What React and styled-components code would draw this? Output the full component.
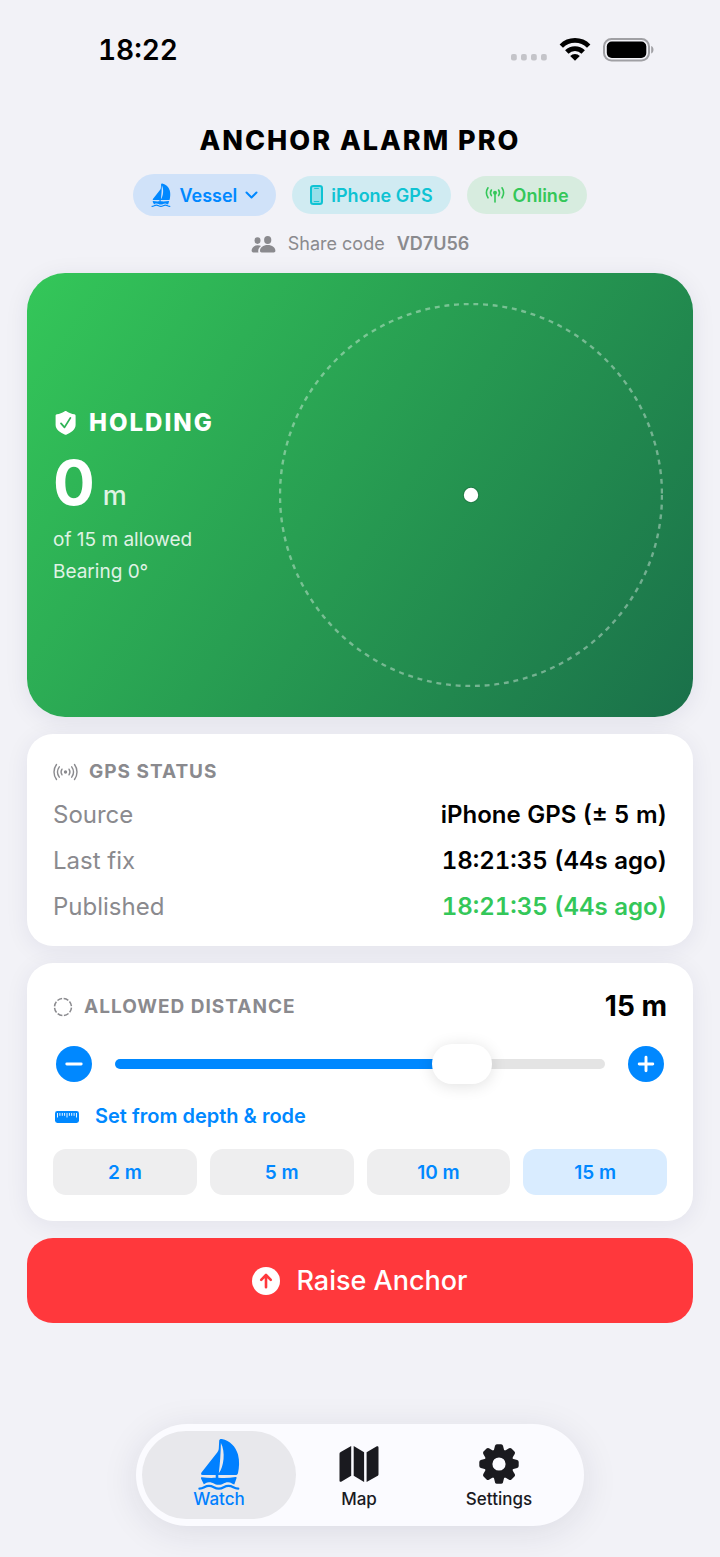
import React, { useState } from "react";
import styled, { createGlobalStyle } from "styled-components";

const GlobalStyle = createGlobalStyle`
  *, *::before, *::after { box-sizing: border-box; }
  body {
    margin: 0;
    background: #f2f2f7;
    color: #000;
    font-family: Inter, "Liberation Sans", sans-serif;
    -webkit-font-smoothing: antialiased;
  }
  button { font: inherit; border: 0; margin: 0; padding: 0; cursor: pointer; }
  h1, h2, p, dl, dd { margin: 0; }
  svg { display: block; flex: none; }
`;

const Page = styled.div`
  display: flex;
  flex-direction: column;
  min-height: 100vh;
  padding-bottom: 31px;
`;

const StatusBar = styled.div`
  display: flex;
  align-items: center;
  justify-content: space-between;
  height: 100px;
  padding: 0 66px 0 98px;
`;

const Clock = styled.time`
  font-size: 28px;
  line-height: 34px;
  font-weight: 600;
  font-variant-numeric: tabular-nums;
`;

const StatusIcons = styled.div`
  display: flex;
  align-items: center;
  gap: 12px;
`;

const Header = styled.header`
  display: flex;
  flex-direction: column;
  align-items: center;
  gap: 15px;
  padding: 23px 26px 16px;
`;

const Title = styled.h1`
  font-size: 27px;
  line-height: 36px;
  font-weight: 800;
  letter-spacing: 2px;
`;

const Chips = styled.div`
  display: flex;
  align-items: center;
  gap: 16px;
`;

const Chip = styled.span`
  display: flex;
  align-items: center;
  gap: 8px;
  height: ${(p) => (p.$tall ? 42 : 38)}px;
  padding: 0 18px;
  border-radius: 21px;
  background: ${(p) => p.$bg};
  color: ${(p) => p.$color};
  font-size: 18px;
  font-weight: 600;
`;

const ShareRow = styled.p`
  display: flex;
  align-items: center;
  gap: 12px;
  color: #8a8a8e;
  font-size: 18px;
  line-height: 26px;
`;

const ShareCode = styled.strong`
  font-weight: 600;
`;

const Main = styled.main`
  display: flex;
  flex-direction: column;
  gap: 17px;
  padding: 0 27px 60px;
`;

const Hero = styled.section`
  display: flex;
  align-items: center;
  justify-content: space-between;
  padding: 30px 30px 30px 26px;
  border-radius: 38px;
  background: linear-gradient(124deg, #34c759, #1a704a);
  box-shadow: 0 4px 24px rgba(30, 30, 80, 0.08);
  color: #fff;
`;

const HeroText = styled.div`
  display: flex;
  flex-direction: column;
  padding-top: 2px;
`;

const HeroState = styled.h2`
  display: flex;
  align-items: center;
  gap: 11px;
  font-size: 24px;
  line-height: 30px;
  font-weight: 800;
  letter-spacing: 2px;
`;

const Reading = styled.p`
  display: flex;
  align-items: baseline;
  gap: 8px;
  margin: 13px 0;
  font-size: 62px;
  line-height: 64px;
  font-weight: 700;
`;

const Unit = styled.span`
  font-size: 27px;
  line-height: 34px;
  font-weight: 500;
  opacity: 0.85;
`;

const HeroNote = styled.p`
  font-size: 19px;
  line-height: 24px;
  opacity: 0.85;
  & + & { margin-top: 8px; }
`;

const RadarSvg = styled.svg`
  flex: 0 1 384px;
  min-width: 0;
  aspect-ratio: 1;
`;

const Card = styled.section`
  display: flex;
  flex-direction: column;
  gap: ${(p) => p.$gap}px;
  padding: 26px 26px ${(p) => p.$bottom}px;
  border-radius: 26px;
  background: #fff;
  box-shadow: 0 4px 24px rgba(30, 30, 80, 0.07);
`;

const CardTitle = styled.h2`
  display: flex;
  align-items: center;
  gap: 11px;
  color: #8a8a8e;
  font-size: 19px;
  line-height: 24px;
  font-weight: 700;
  letter-spacing: 1px;
`;

const Facts = styled.dl`
  display: flex;
  flex-direction: column;
  gap: 16px;
`;

const Fact = styled.div`
  display: flex;
  justify-content: space-between;
  font-size: 24px;
  line-height: 30px;
`;

const FactName = styled.dt`
  color: #8a8a8e;
`;

const FactValue = styled.dd`
  font-weight: 600;
  font-variant-numeric: tabular-nums;
  color: ${(p) => (p.$good ? "#34c759" : "#000")};
`;

const CardHead = styled.div`
  display: flex;
  align-items: center;
  justify-content: space-between;
`;

const Distance = styled.output`
  font-size: 28px;
  line-height: 35px;
  font-weight: 700;
`;

const SliderRow = styled.div`
  display: flex;
  align-items: center;
  gap: 23px;
  padding: 0 3px;
`;

const RoundButton = styled.button`
  flex: none;
  display: grid;
  place-items: center;
  width: 36px;
  height: 36px;
  border-radius: 50%;
  background: #0088ff;
  color: #fff;
`;

const Slider = styled.input`
  flex: 1;
  min-width: 0;
  height: 40px;
  margin: 0;
  background: none;
  appearance: none;

  &::-webkit-slider-runnable-track {
    height: 10px;
    border-radius: 5px;
    background: linear-gradient(
      to right,
      #0088ff var(--filled),
      #e4e4e4 var(--filled)
    );
  }

  &::-webkit-slider-thumb {
    appearance: none;
    width: 60px;
    height: 40px;
    margin-top: -15px;
    border-radius: 20px;
    background: #fff;
    box-shadow: 0 2px 16px rgba(0, 0, 0, 0.12);
  }
`;

const TextButton = styled.button`
  align-self: flex-start;
  display: flex;
  align-items: center;
  gap: 15px;
  background: none;
  color: #0088ff;
  font-size: 20px;
  line-height: 25px;
  font-weight: 600;
`;

const Presets = styled.div`
  display: grid;
  grid-template-columns: repeat(4, 1fr);
  gap: 13px;
`;

const Preset = styled.button`
  height: 46px;
  border-radius: 13px;
  background: ${(p) => (p.$active ? "#d9ecff" : "#eeeeef")};
  color: #0088ff;
  font-size: 19px;
  font-weight: 600;
`;

const RaiseButton = styled.button`
  display: flex;
  align-items: center;
  justify-content: center;
  gap: 16px;
  height: 85px;
  border-radius: 26px;
  background: #ff383c;
  color: #fff;
  font-size: 27px;
  font-weight: 500;
`;

const TabBar = styled.nav`
  display: flex;
  align-self: center;
  margin-top: auto;
  padding: 7px 8px 7px 6px;
  border-radius: 51px;
  background: #fbfbff;
  box-shadow: 0 6px 36px rgba(30, 30, 60, 0.1);
`;

const Tab = styled.button`
  display: flex;
  flex-direction: column;
  align-items: center;
  width: 154px;
  height: 88px;
  padding-top: 7px;
  border-radius: 44px;
  background: ${(p) => (p.$active ? "#e8e8ec" : "none")};
  color: ${(p) => (p.$active ? "#0080ff" : "#1a1a1f")};
  font-size: 17px;
  line-height: 18px;
  font-weight: 500;
  & + & { margin-left: -14px; }
`;

const TabIcon = styled.span`
  display: grid;
  place-items: center;
  height: 52px;
`;

const Sailboat = ({ width, height }) => (
  <svg width={width} height={height} viewBox="0 0 42 52" aria-hidden="true">
    <path
      fill="currentColor"
      fillRule="evenodd"
      d="M21.2 2.6C21.3 1.2 22.4.8 23.8 1 32 2.6 37.8 8.600 40 16.500c1.700 7 1.200 13 0 18.500-.4 1.400-1 2-2.400 2H4.600c-1.600 0-2-1.200-1.100-2.400L19.200 14.500c1-1.400 1.500-2.600 1.600-4.200zM22.900 5c-.2 10.500-.9 20.500-2.100 30.300C26 28.500 27.600 14 22.900 5z"
    />
    <path
      fill="currentColor"
      d="M17.700 36.500h2.600v3.300c6 .4 12 .2 17.200-.8.8-.2 1.300.4 1 1.200l-2.200 6.200c-2.200-.4-3-2.200-6.300-2.200-4 0-4.700 2.600-9.300 2.600-4.700 0-5-2.600-9.700-2.600-2.700 0-3.700 1.400-5.200 2L3 40.400c-.2-.9.2-1.300 1-1.200 4.500.7 9 .8 13.700.6z"
    />
    <path
      fill="none"
      stroke="currentColor"
      strokeWidth="2.400"
      strokeLinecap="round"
      d="M1.500 50.600c4.600 0 4.900-2.700 9.500-2.700s5 2.700 9.800 2.700 5-2.700 9.700-2.700 5 2.700 9.700 2.700"
    />
  </svg>
);

const Wifi = () => (
  <svg width="32" height="24" viewBox="0 0 32 24" aria-hidden="true">
    <g fill="none" stroke="#000" strokeWidth="4.800">
      <path d="M2.300 8.100a19.400 19.400 0 0 1 27.400 0" />
      <path d="M7.800 14a11.600 11.600 0 0 1 16.400 0" />
    </g>
    <path d="M16 22.800l-4.800-4.800a6.800 6.800 0 0 1 9.600 0z" />
  </svg>
);

const Battery = () => (
  <svg width="51" height="24" viewBox="0 0 51 24" aria-hidden="true">
    <rect x="1" y="1" width="45" height="21.500" rx="7.500" fill="none" stroke="#a0a0a4" strokeWidth="2" />
    <rect x="3.800" y="3.500" width="39.500" height="16.500" rx="5" />
    <path d="M48.200 8c3 1 3 6.500 0 7.500z" fill="#a0a0a4" />
  </svg>
);

const SignalDots = () => (
  <svg width="37" height="24" viewBox="0 0 37 24" fill="#c4c4c9" aria-hidden="true">
    {[0, 10, 20, 30].map((x) => (
      <rect key={x} x={x + 1} y="16" width="5.800" height="6.500" rx="2" />
    ))}
  </svg>
);

const Phone = () => (
  <svg width="13" height="20" viewBox="0 0 13 20" aria-hidden="true">
    <rect x="1" y="1" width="11" height="18" rx="2.300" fill="currentColor" fillOpacity=".3" stroke="currentColor" strokeWidth="2" />
    <path d="M4.600 3.400h3.800M4.200 16.600h4.600" stroke="currentColor" strokeWidth="1" strokeLinecap="round" />
  </svg>
);

const Antenna = () => (
  <svg width="20" height="18" viewBox="0 0 20 18" fill="none" stroke="currentColor" strokeWidth="1.600" strokeLinecap="round" aria-hidden="true">
    <circle cx="10" cy="6.800" r="2" fill="currentColor" stroke="none" />
    <path d="M10 7v9" />
    <path d="M6.400 4a5 5 0 0 0 0 5.600M13.600 4a5 5 0 0 1 0 5.600" />
    <path d="M3 1.800a9.300 9.300 0 0 0 0 10M17 1.800a9.300 9.300 0 0 1 0 10" />
  </svg>
);

const Chevron = () => (
  <svg width="13" height="8" viewBox="0 0 13 8" fill="none" stroke="currentColor" strokeWidth="2" strokeLinecap="round" strokeLinejoin="round" aria-hidden="true">
    <path d="M1.500 1.500l5 5 5-5" />
  </svg>
);

const People = () => (
  <svg width="25" height="17" viewBox="0 0 25 17" fill="currentColor" aria-hidden="true">
    <ellipse cx="6.500" cy="4.600" rx="3" ry="3.300" />
    <ellipse cx="16.700" cy="4" rx="3.600" ry="3.900" />
    <path d="M.600 14.600c0-3 2.700-5.400 6-5.400 1.400 0 2.500.3 3.500.9-1.800 1.300-2.900 3-2.900 5.100 0 .5.100.8.300 1.200H2.200c-1 0-1.600-.7-1.600-1.800z" />
    <path d="M9 14.700c0-3 3.200-5.700 7.700-5.700s7.700 2.700 7.700 5.700c0 1.200-.6 1.700-1.700 1.700h-12c-1.100 0-1.700-.5-1.700-1.700z" />
  </svg>
);

const Shield = () => (
  <svg width="25" height="26" viewBox="0 0 25 26" aria-hidden="true">
    <path
      fill="#fff"
      d="M11.400 1.400c.9-.5 1.500-.5 2.400 0 2.300 1.400 4.900 2.300 7.500 2.900.9.200 1.300.7 1.300 1.600v9c0 5-5.300 7.800-8.900 9.500-.7.400-1.400.4-2.100 0-3.700-1.700-9-4.500-9-9.500v-9c0-.9.400-1.400 1.300-1.600 2.600-.6 5.200-1.500 7.500-2.900z"
    />
    <path d="M8 13.400l3.500 4 5.900-9.500" fill="none" stroke="#2fb457" strokeWidth="1.800" strokeLinecap="round" strokeLinejoin="round" />
  </svg>
);

const Waves = () => (
  <svg width="25" height="18" viewBox="0 0 25 18" fill="none" stroke="currentColor" strokeWidth="1.400" strokeLinecap="round" aria-hidden="true">
    <circle cx="12.500" cy="9" r="1.700" fill="currentColor" stroke="none" />
    <path d="M9 6.200a5 5 0 0 0 0 5.600M16 6.200a5 5 0 0 1 0 5.600" />
    <path d="M6.300 3.800a9 9 0 0 0 0 10.400M18.700 3.800a9 9 0 0 1 0 10.400" />
    <path d="M3.500 1.500a12.500 12.500 0 0 0 0 15M21.500 1.500a12.500 12.500 0 0 1 0 15" />
  </svg>
);

const DashedCircle = () => (
  <svg width="20" height="20" viewBox="0 0 20 20" aria-hidden="true">
    <circle cx="10" cy="10" r="8.500" pathLength="80" fill="none" stroke="currentColor" strokeWidth="1.500" strokeDasharray="7.600 2.400" strokeDashoffset="-1" />
  </svg>
);

const Ruler = () => (
  <svg width="27" height="12" viewBox="0 0 27 12" aria-hidden="true">
    <rect x="2" y="0" width="24" height="12" rx="2.400" fill="currentColor" />
    <g stroke="#fff" strokeWidth=".9">
      <path d="M4.500 2v4.500M14 2v4.500M23.500 2v4.500" />
      <path d="M6.900 2v2.800M9.300 2v2.800M11.600 2v2.800M16.400 2v2.800M18.700 2v2.800M21.100 2v2.800" />
    </g>
  </svg>
);

const Stroke = ({ plus }) => (
  <svg width="18" height="18" viewBox="0 0 18 18" stroke="currentColor" strokeWidth="2.900" strokeLinecap="round" aria-hidden="true">
    <path d={plus ? "M2.200 9h13.600M9 2.200v13.600" : "M1.800 9h14.400"} />
  </svg>
);

const ArrowUpCircle = () => (
  <svg width="28" height="28" viewBox="0 0 28 28" aria-hidden="true">
    <circle cx="14" cy="14" r="14" fill="#fff" />
    <path d="M14 20.200V8.200M9.200 12.800L14 8l4.800 4.800" fill="none" stroke="#ff383c" strokeWidth="2.600" strokeLinecap="round" strokeLinejoin="round" />
  </svg>
);

const MapIcon = () => (
  <svg width="40" height="38" viewBox="0 0 40 38" fill="currentColor" aria-hidden="true">
    <path d="M12.200 1v29.800L2.600 36.600C1.400 37.200.500 36.800.500 35.400V9.200c0-1 .3-1.600 1.200-2.100z" />
    <path d="M14.700 1l10.400 6.200V37l-10.400-6.200z" />
    <path d="M27.600 7.200l9.800-5.700c1.200-.6 2.100-.2 2.100 1.200v26.200c0 1-.3 1.600-1.200 2.100L27.600 37z" />
  </svg>
);

const Gear = () => (
  <svg width="40" height="40" viewBox="-20 -20 40 40" fill="currentColor" aria-hidden="true">
    <path fillRule="evenodd" d="M0-14.800a14.800 14.800 0 1 0 0 29.600 14.800 14.800 0 1 0 0-29.600zM0-6.600a6.600 6.600 0 1 1 0 13.200 6.600 6.600 0 1 1 0-13.200z" />
    {[0, 45, 90, 135, 180, 225, 270, 315].map((angle) => (
      <path
        key={angle}
        transform={`rotate(${angle})`}
        d="M-5.200-13.500L-4-18.200Q-3.600-19.700-2.100-19.700H2.100Q3.600-19.700 4-18.200L5.200-13.500z"
      />
    ))}
  </svg>
);

const Radar = () => (
  <RadarSvg viewBox="0 0 384 384" role="img" aria-label="Vessel position inside the allowed circle">
    <circle cx="192" cy="192" r="191" fill="none" stroke="#fff" strokeOpacity=".38" strokeWidth="2.400" strokeDasharray="4.900 4.800" />
    <circle cx="192" cy="192" r="8.200" fill="#000" fillOpacity=".15" />
    <circle cx="192" cy="192" r="7.200" fill="#fff" />
  </RadarSvg>
);

const MIN = 1;
const MAX = 20;
const PRESETS = [2, 5, 10, 15];

const FACTS = [
  { name: "Source", value: "iPhone GPS (± 5 m)" },
  { name: "Last fix", value: "18:21:35 (44s ago)" },
  { name: "Published", value: "18:21:35 (44s ago)", good: true },
];

const TABS = [
  { name: "Watch", icon: <Sailboat width={42} height={52} /> },
  { name: "Map", icon: <MapIcon /> },
  { name: "Settings", icon: <Gear /> },
];

export default function App() {
  const [distance, setDistance] = useState(15);
  const [tab, setTab] = useState("Watch");
  const filled = `${((distance - MIN) / (MAX - MIN)) * 100}%`;

  return (
    <>
      <GlobalStyle />
      <Page>
        <StatusBar>
          <Clock>18:22</Clock>
          <StatusIcons>
            <SignalDots />
            <Wifi />
            <Battery />
          </StatusIcons>
        </StatusBar>

        <Header>
          <Title>ANCHOR ALARM PRO</Title>
          <Chips>
            <Chip as="button" type="button" $tall $bg="#d0e2f9" $color="#0088ff">
              <Sailboat width={20} height={24} />
              Vessel
              <Chevron />
            </Chip>
            <Chip $bg="#d0ebf2" $color="#0fc3d3">
              <Phone />
              iPhone GPS
            </Chip>
            <Chip $bg="#d7ecdf" $color="#34c759">
              <Antenna />
              Online
            </Chip>
          </Chips>
          <ShareRow>
            <People />
            <span>Share code</span>
            <ShareCode>VD7U56</ShareCode>
          </ShareRow>
        </Header>

        <Main>
          <Hero>
            <HeroText>
              <HeroState>
                <Shield />
                HOLDING
              </HeroState>
              <Reading>
                0<Unit>m</Unit>
              </Reading>
              <HeroNote>of {distance} m allowed</HeroNote>
              <HeroNote>Bearing 0°</HeroNote>
            </HeroText>
            <Radar />
          </Hero>

          <Card $gap={16} $bottom={24}>
            <CardTitle>
              <Waves />
              GPS STATUS
            </CardTitle>
            <Facts>
              {FACTS.map((fact) => (
                <Fact key={fact.name}>
                  <FactName>{fact.name}</FactName>
                  <FactValue $good={fact.good}>{fact.value}</FactValue>
                </Fact>
              ))}
            </Facts>
          </Card>

          <Card $gap={20} $bottom={26}>
            <CardHead>
              <CardTitle>
                <DashedCircle />
                ALLOWED DISTANCE
              </CardTitle>
              <Distance htmlFor="distance">{distance} m</Distance>
            </CardHead>
            <SliderRow>
              <RoundButton type="button" aria-label="Decrease" onClick={() => setDistance(Math.max(MIN, distance - 1))}>
                <Stroke />
              </RoundButton>
              <Slider
                id="distance"
                type="range"
                aria-label="Allowed distance"
                min={MIN}
                max={MAX}
                value={distance}
                style={{ "--filled": filled }}
                onChange={(e) => setDistance(Number(e.target.value))}
              />
              <RoundButton type="button" aria-label="Increase" onClick={() => setDistance(Math.min(MAX, distance + 1))}>
                <Stroke plus />
              </RoundButton>
            </SliderRow>
            <TextButton type="button">
              <Ruler />
              Set from depth &amp; rode
            </TextButton>
            <Presets>
              {PRESETS.map((preset) => (
                <Preset key={preset} type="button" $active={preset === distance} onClick={() => setDistance(preset)}>
                  {preset} m
                </Preset>
              ))}
            </Presets>
          </Card>

          <RaiseButton type="button">
            <ArrowUpCircle />
            Raise Anchor
          </RaiseButton>
        </Main>

        <TabBar aria-label="Sections">
          {TABS.map(({ name, icon }) => (
            <Tab key={name} type="button" $active={name === tab} onClick={() => setTab(name)}>
              <TabIcon>{icon}</TabIcon>
              {name}
            </Tab>
          ))}
        </TabBar>
      </Page>
    </>
  );
}
